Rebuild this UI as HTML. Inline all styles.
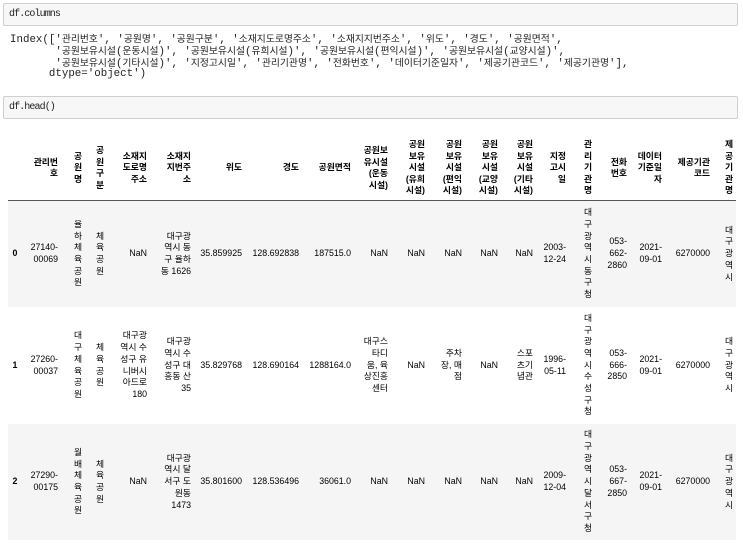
<!DOCTYPE html>
<html><head><meta charset="utf-8">
<style>
*{margin:0;padding:0;box-sizing:border-box}
body{width:743px;height:544px;background:#fff;position:relative;overflow:hidden;font-family:"Liberation Sans","Noto Sans CJK KR",sans-serif;color:#000}
.code{position:absolute;left:3px;width:735px;background:#f7f7f7;border:1px solid #cfcfcf;border-radius:2px;font-family:"Liberation Mono","Noto Sans CJK KR",monospace;font-size:10px;letter-spacing:-0.9px;line-height:21px;padding-left:5px;color:#222}
.out{position:absolute;left:10px;top:33px;font-family:"Liberation Mono","Noto Sans CJK KR",monospace;font-size:10.8px;letter-spacing:0;line-height:10px;white-space:pre;color:#222}
.out b{font-weight:normal;font-family:"Noto Sans CJK KR",sans-serif;font-size:9.8px;letter-spacing:0;line-height:10px}
.stripe{position:absolute;left:8px;width:728px;background:#f5f5f5}
.hline{position:absolute;left:8px;width:728px;top:200px;height:1px;background:#555}
.c{position:absolute;display:flex;align-items:center;font-size:8.8px;line-height:11.7px}
.c>div{text-align:right;width:100%}
.cc>div{text-align:center}
.h{font-weight:bold;line-height:11.5px}
</style></head><body>
<div class="code" style="top:3px;height:23px">df.columns</div>
<div class="out">Index(['<b>관리번호</b>', '<b>공원명</b>', '<b>공원구분</b>', '<b>소재지도로명주소</b>', '<b>소재지지번주소</b>', '<b>위도</b>', '<b>경도</b>', '<b>공원면적</b>',
       '<b>공원보유시설</b>(<b>운동시설</b>)', '<b>공원보유시설</b>(<b>유희시설</b>)', '<b>공원보유시설</b>(<b>편익시설</b>)', '<b>공원보유시설</b>(<b>교양시설</b>)',
       '<b>공원보유시설</b>(<b>기타시설</b>)', '<b>지정고시일</b>', '<b>관리기관명</b>', '<b>전화번호</b>', '<b>데이터기준일자</b>', '<b>제공기관코드</b>', '<b>제공기관명</b>'],
      dtype='object')</div>
<div class="code" style="top:96px;height:23px">df.head()</div>

<div class="stripe" style="top:201px;height:106px"></div>
<div class="stripe" style="top:424px;height:116px"></div>
<div class="hline"></div>

<!-- header -->
<div class="c h" style="top:135px;height:66px;left:20px;width:38px"><div>관리번<br>호</div></div>
<div class="c h cc" style="top:135px;height:66px;left:68px;width:20px"><div>공<br>원<br>명</div></div>
<div class="c h cc" style="top:135px;height:66px;left:90px;width:20px"><div>공<br>원<br>구<br>분</div></div>
<div class="c h" style="top:135px;height:66px;left:110px;width:37px"><div>소재지<br>도로명<br>주소</div></div>
<div class="c h" style="top:135px;height:66px;left:152px;width:39px"><div>소재지<br>지번주<br>소</div></div>
<div class="c h" style="top:135px;height:66px;left:200px;width:42px"><div>위도</div></div>
<div class="c h" style="top:135px;height:66px;left:255px;width:44px"><div>경도</div></div>
<div class="c h" style="top:135px;height:66px;left:300px;width:51px"><div>공원면적</div></div>
<div class="c h" style="top:135px;height:66px;left:355px;width:33px"><div>공원보<br>유시설<br>(운동<br>시설)</div></div>
<div class="c h" style="top:135px;height:66px;left:395px;width:30px"><div>공원<br>보유<br>시설<br>(유희<br>시설)</div></div>
<div class="c h" style="top:135px;height:66px;left:432px;width:30px"><div>공원<br>보유<br>시설<br>(편익<br>시설)</div></div>
<div class="c h" style="top:135px;height:66px;left:468px;width:30px"><div>공원<br>보유<br>시설<br>(교양<br>시설)</div></div>
<div class="c h" style="top:135px;height:66px;left:503px;width:30px"><div>공원<br>보유<br>시설<br>(기타<br>시설)</div></div>
<div class="c h" style="top:135px;height:66px;left:540px;width:26px"><div>지정<br>고시<br>일</div></div>
<div class="c h cc" style="top:135px;height:66px;left:578px;width:20px"><div>관<br>리<br>기<br>관<br>명</div></div>
<div class="c h" style="top:135px;height:66px;left:600px;width:27px"><div>전화<br>번호</div></div>
<div class="c h" style="top:135px;height:66px;left:630px;width:32px"><div>데이터<br>기준일<br>자</div></div>
<div class="c h" style="top:135px;height:66px;left:665px;width:45px"><div>제공기관<br>코드</div></div>
<div class="c h cc" style="top:135px;height:66px;left:719px;width:20px"><div>제<br>공<br>기<br>관<br>명</div></div>

<!-- row 0 -->
<div class="c h cc" style="top:201px;height:106px;left:8px;width:14px"><div>0</div></div>
<div class="c" style="top:201px;height:106px;left:20px;width:38px"><div>27140-<br>00069</div></div>
<div class="c cc" style="top:201px;height:106px;left:68px;width:20px"><div>율<br>하<br>체<br>육<br>공<br>원</div></div>
<div class="c cc" style="top:201px;height:106px;left:90px;width:20px"><div>체<br>육<br>공<br>원</div></div>
<div class="c" style="top:201px;height:106px;left:110px;width:37px"><div>NaN</div></div>
<div class="c" style="top:201px;height:106px;left:152px;width:39px"><div>대구광<br>역시 동<br>구 율하<br>동 1626</div></div>
<div class="c" style="top:201px;height:106px;left:195px;width:47px"><div>35.859925</div></div>
<div class="c" style="top:201px;height:106px;left:245px;width:54px"><div>128.692838</div></div>
<div class="c" style="top:201px;height:106px;left:300px;width:51px"><div>187515.0</div></div>
<div class="c" style="top:201px;height:106px;left:355px;width:33px"><div>NaN</div></div>
<div class="c" style="top:201px;height:106px;left:395px;width:30px"><div>NaN</div></div>
<div class="c" style="top:201px;height:106px;left:432px;width:30px"><div>NaN</div></div>
<div class="c" style="top:201px;height:106px;left:468px;width:30px"><div>NaN</div></div>
<div class="c" style="top:201px;height:106px;left:503px;width:30px"><div>NaN</div></div>
<div class="c" style="top:201px;height:106px;left:536px;width:30px"><div>2003-<br>12-24</div></div>
<div class="c cc" style="top:201px;height:106px;left:578px;width:20px"><div>대<br>구<br>광<br>역<br>시<br>동<br>구<br>청</div></div>
<div class="c" style="top:201px;height:106px;left:600px;width:27px"><div>053-<br>662-<br>2860</div></div>
<div class="c" style="top:201px;height:106px;left:630px;width:32px"><div>2021-<br>09-01</div></div>
<div class="c" style="top:201px;height:106px;left:665px;width:45px"><div>6270000</div></div>
<div class="c cc" style="top:201px;height:106px;left:719px;width:20px"><div>대<br>구<br>광<br>역<br>시</div></div>

<!-- row 1 -->
<div class="c h cc" style="top:307px;height:117px;left:8px;width:14px"><div>1</div></div>
<div class="c" style="top:307px;height:117px;left:20px;width:38px"><div>27260-<br>00037</div></div>
<div class="c cc" style="top:307px;height:117px;left:68px;width:20px"><div>대<br>구<br>체<br>육<br>공<br>원</div></div>
<div class="c cc" style="top:307px;height:117px;left:90px;width:20px"><div>체<br>육<br>공<br>원</div></div>
<div class="c" style="top:307px;height:117px;left:110px;width:37px"><div>대구광<br>역시 수<br>성구 유<br>니버시<br>아드로<br>180</div></div>
<div class="c" style="top:307px;height:117px;left:152px;width:39px"><div>대구광<br>역시 수<br>성구 대<br>흥동 산<br>35</div></div>
<div class="c" style="top:307px;height:117px;left:195px;width:47px"><div>35.829768</div></div>
<div class="c" style="top:307px;height:117px;left:245px;width:54px"><div>128.690164</div></div>
<div class="c" style="top:307px;height:117px;left:300px;width:51px"><div>1288164.0</div></div>
<div class="c" style="top:307px;height:117px;left:355px;width:33px"><div>대구스<br>타디<br>움, 육<br>상진흥<br>센터</div></div>
<div class="c" style="top:307px;height:117px;left:395px;width:30px"><div>NaN</div></div>
<div class="c" style="top:307px;height:117px;left:428px;width:34px"><div>주차<br>장, 매<br>점</div></div>
<div class="c" style="top:307px;height:117px;left:468px;width:30px"><div>NaN</div></div>
<div class="c" style="top:307px;height:117px;left:503px;width:30px"><div>스포<br>츠기<br>념관</div></div>
<div class="c" style="top:307px;height:117px;left:536px;width:30px"><div>1996-<br>05-11</div></div>
<div class="c cc" style="top:307px;height:117px;left:578px;width:20px"><div>대<br>구<br>광<br>역<br>시<br>수<br>성<br>구<br>청</div></div>
<div class="c" style="top:307px;height:117px;left:600px;width:27px"><div>053-<br>666-<br>2850</div></div>
<div class="c" style="top:307px;height:117px;left:630px;width:32px"><div>2021-<br>09-01</div></div>
<div class="c" style="top:307px;height:117px;left:665px;width:45px"><div>6270000</div></div>
<div class="c cc" style="top:307px;height:117px;left:719px;width:20px"><div>대<br>구<br>광<br>역<br>시</div></div>

<!-- row 2 -->
<div class="c h cc" style="top:424px;height:116px;left:8px;width:14px"><div>2</div></div>
<div class="c" style="top:424px;height:116px;left:20px;width:38px"><div>27290-<br>00175</div></div>
<div class="c cc" style="top:424px;height:116px;left:68px;width:20px"><div>월<br>배<br>체<br>육<br>공<br>원</div></div>
<div class="c cc" style="top:424px;height:116px;left:90px;width:20px"><div>체<br>육<br>공<br>원</div></div>
<div class="c" style="top:424px;height:116px;left:110px;width:37px"><div>NaN</div></div>
<div class="c" style="top:424px;height:116px;left:152px;width:39px"><div>대구광<br>역시 달<br>서구 도<br>원동<br>1473</div></div>
<div class="c" style="top:424px;height:116px;left:195px;width:47px"><div>35.801600</div></div>
<div class="c" style="top:424px;height:116px;left:245px;width:54px"><div>128.536496</div></div>
<div class="c" style="top:424px;height:116px;left:300px;width:51px"><div>36061.0</div></div>
<div class="c" style="top:424px;height:116px;left:355px;width:33px"><div>NaN</div></div>
<div class="c" style="top:424px;height:116px;left:395px;width:30px"><div>NaN</div></div>
<div class="c" style="top:424px;height:116px;left:432px;width:30px"><div>NaN</div></div>
<div class="c" style="top:424px;height:116px;left:468px;width:30px"><div>NaN</div></div>
<div class="c" style="top:424px;height:116px;left:503px;width:30px"><div>NaN</div></div>
<div class="c" style="top:424px;height:116px;left:536px;width:30px"><div>2009-<br>12-04</div></div>
<div class="c cc" style="top:424px;height:116px;left:578px;width:20px"><div>대<br>구<br>광<br>역<br>시<br>달<br>서<br>구<br>청</div></div>
<div class="c" style="top:424px;height:116px;left:600px;width:27px"><div>053-<br>667-<br>2850</div></div>
<div class="c" style="top:424px;height:116px;left:630px;width:32px"><div>2021-<br>09-01</div></div>
<div class="c" style="top:424px;height:116px;left:665px;width:45px"><div>6270000</div></div>
<div class="c cc" style="top:424px;height:116px;left:719px;width:20px"><div>대<br>구<br>광<br>역<br>시</div></div>
</body></html>
